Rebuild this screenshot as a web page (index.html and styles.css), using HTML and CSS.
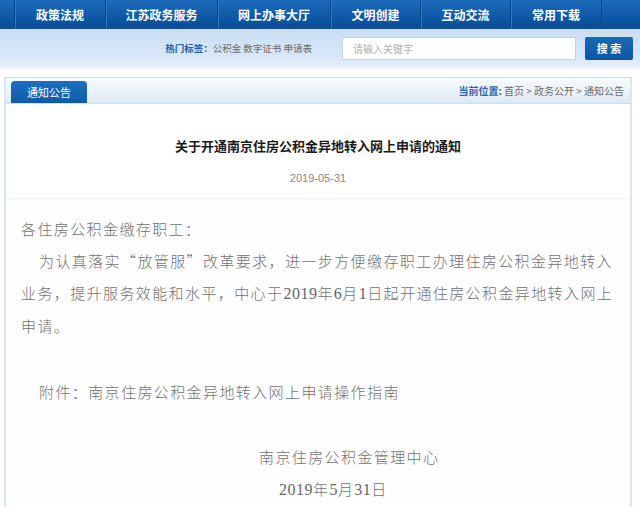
FILE: index.html
```html
<!DOCTYPE html>
<html lang="zh">
<head>
<meta charset="utf-8">
<title>通知公告</title>
<link rel="stylesheet" href="styles.css">
</head>
<body>
<nav class="nav">
  <a class="nav-item w91">政策法规</a>
  <a class="nav-item w112">江苏政务服务</a>
  <a class="nav-item w113">网上办事大厅</a>
  <a class="nav-item w90">文明创建</a>
  <a class="nav-item w90">互动交流</a>
  <a class="nav-item w92 last">常用下载</a>
</nav>
<div class="search-band">
  <div class="hot"><b>热门标签：</b>公积金 数字证书 申请表</div>
  <div class="search-input">请输入关键字</div>
  <div class="search-btn">搜 索</div>
</div>
<section class="panel">
  <div class="panel-head">
    <div class="tab">通知公告</div>
    <div class="crumb"><b>当前位置:</b> 首页 &gt; 政务公开 &gt; 通知公告</div>
  </div>
  <div class="article-head">
    <h1 class="title">关于开通南京住房公积金异地转入网上申请的通知</h1>
    <div class="date">2019-05-31</div>
  </div>
  <div class="article-body">
    <p class="line">各住房公积金缴存职工：</p>
    <p class="line indent">为认真落实“放管服”改革要求，进一步方便缴存职工办理住房公积金异地转入</p>
    <p class="line">业务，提升服务效能和水平，中心于<span class="num">2019</span>年<span class="num">6</span>月<span class="num">1</span>日起开通住房公积金异地转入网上</p>
    <p class="line">申请。</p>
    <p class="line attach">附件：南京住房公积金异地转入网上申请操作指南</p>
    <p class="line sign">南京住房公积金管理中心</p>
    <p class="line sign-date"><span class="num">2019</span>年<span class="num">5</span>月<span class="num">31</span>日</p>
  </div>
</section>
</body>
</html>
```

FILE: styles.css
```css
* { box-sizing: border-box; }
html, body { margin: 0; padding: 0; background: #ffffff; }
body {
  width: 640px;
  height: 507px;
  overflow: hidden;
  font-family: "Noto Sans CJK SC", "Liberation Sans", sans-serif;
}

.nav {
  display: flex;
  height: 29px;
  padding-left: 14px;
  background: linear-gradient(#1d6cbc, #0f58a5 60%, #0a4b94);
}
.nav-item {
  display: flex;
  align-items: center;
  justify-content: center;
  color: #ffffff;
  font-size: 12px;
  font-weight: bold;
  border-left: 1px solid #0a4588;
  box-shadow: inset 1px 0 0 #3479c0;
}
.nav-item.last { border-right: 1px solid #0a4588; }
.w91 { width: 91px; }
.w112 { width: 112px; }
.w113 { width: 113px; }
.w90 { width: 90px; }
.w92 { width: 92px; }

.search-band {
  display: flex;
  align-items: center;
  height: 40px;
  padding: 0 7px 0 0;
  background: linear-gradient(#c9def3, #d8e7f6 70%, #e3eef9);
  border-bottom: 2px solid #f1f6fb;
}
.hot {
  margin-left: auto;
  font-size: 9.5px;
  color: #6a6a6a;
}
.hot b { color: #1f5ea6; font-weight: bold; }
.search-input {
  width: 234px;
  height: 23px;
  margin-left: 30px;
  padding-left: 10px;
  background: #ffffff;
  border: 1px solid #c2d6ea;
  font-size: 10px;
  line-height: 21px;
  color: #b0b0b0;
}
.search-btn {
  width: 48px;
  height: 23px;
  margin-left: 9px;
  background: linear-gradient(#1a68b6, #0d57a3);
  border-radius: 2px;
  color: #ffffff;
  font-size: 11px;
  font-weight: bold;
  line-height: 23px;
  text-align: center;
}

.panel {
  width: 628px;
  height: 440px;
  margin: 8px 0 0 4px;
  border: 1px solid #c9dbec;
  border-left: 2px solid #dbe6f1;
  border-right: 2px solid #dbe6f1;
  border-bottom: none;
  background: #ffffff;
}
.panel-head {
  display: flex;
  align-items: flex-end;
  height: 26px;
  padding-left: 5px;
  background: linear-gradient(#f8fbfe, #e9f1f9 60%, #dde9f5);
  border-bottom: 1px solid #cfdeee;
}
.tab {
  width: 76px;
  height: 22px;
  background: linear-gradient(#1f6fbf, #0f5aa8);
  border-radius: 4px 4px 0 0;
  color: #ffffff;
  font-size: 11px;
  line-height: 22px;
  text-align: center;
}
.crumb {
  margin-left: auto;
  margin-right: 6px;
  align-self: center;
  font-size: 10px;
  color: #6b6b6b;
}
.crumb b { color: #2b68ab; font-weight: bold; }

.article-head {
  padding-top: 32px;
  height: 95px;
  text-align: center;
  border-bottom: 1px solid #f2f2f2;
}
.title {
  margin: 0;
  font-size: 13px;
  line-height: 20px;
  font-weight: bold;
  color: #1a1a1a;
}
.date {
  margin-top: 14px;
  font-size: 11px;
  line-height: 16px;
  color: #888888;
  font-family: "Liberation Sans", sans-serif;
}

.article-body {
  height: 300px;
  padding: 14px 0 0 15px;
  font-size: 15px;
  line-height: 32px;
  letter-spacing: 1.4px;
  font-weight: 300;
  color: #727272;
  white-space: nowrap;
  background: #fdfdfd;
}
.line { margin: 0; }
.indent { padding-left: 18px; }
.num {
  font-family: "Liberation Serif", serif;
  font-size: 16px;
  letter-spacing: 0.5px;
  color: #666666;
}
.attach { margin-top: 34px; padding-left: 18px; }
.sign { margin-top: 33px; padding-left: 238px; }
.sign-date { padding-left: 258px; }
```
